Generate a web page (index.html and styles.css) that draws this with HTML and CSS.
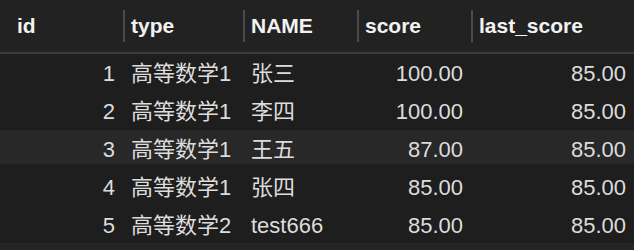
FILE: index.html
```html
<!DOCTYPE html>
<html>
<head>
<meta charset="utf-8">
<link rel="stylesheet" href="styles.css">
</head>
<body>
<div class="grid">
  <div class="head">
    <div class="hc first">id</div>
    <div class="hc">type</div>
    <div class="hc">NAME</div>
    <div class="hc">score</div>
    <div class="hc">last_score</div>
  </div>
  <div class="body">
    <div class="row"><div class="c num">1</div><div class="c">高等数学1</div><div class="c">张三</div><div class="c num">100.00</div><div class="c num">85.00</div></div>
    <div class="row"><div class="c num">2</div><div class="c">高等数学1</div><div class="c">李四</div><div class="c num">100.00</div><div class="c num">85.00</div></div>
    <div class="row alt"><div class="c num">3</div><div class="c">高等数学1</div><div class="c">王五</div><div class="c num">87.00</div><div class="c num">85.00</div></div>
    <div class="row"><div class="c num">4</div><div class="c">高等数学1</div><div class="c">张四</div><div class="c num">85.00</div><div class="c num">85.00</div></div>
    <div class="row"><div class="c num">5</div><div class="c">高等数学2</div><div class="c">test666</div><div class="c num">85.00</div><div class="c num">85.00</div></div>
  </div>
  <div class="foot"></div>
</div>
</body>
</html>
```

FILE: styles.css
```css
html, body {
  margin: 0;
  padding: 0;
  background: #1e1e1e;
}
body {
  font-family: "Liberation Sans", "Noto Sans CJK SC", sans-serif;
  font-size: 22px;
  color: #dcdcdc;
  width: 634px;
  height: 250px;
  overflow: hidden;
}
.grid {
  display: flex;
  flex-direction: column;
}
.head, .row {
  display: grid;
  grid-template-columns: 123px 120px 114px 114px 163px;
}
.head {
  height: 52px;
  align-items: center;
  background: #222222;
  border-bottom: 2px solid #3c3c3c;
}
.hc {
  height: 32px;
  line-height: 32px;
  border-left: 2px solid #4a4a4a;
  padding-left: 6px;
  color: #f2f2f2;
  font-weight: bold;
  font-size: 21px;
}
.hc.first {
  border-left: none;
  padding-left: 17px;
}
.body {
  display: flex;
  flex-direction: column;
  gap: 4px;
}
.row {
  height: 34px;
  box-sizing: border-box;
  padding-top: 6px;
  line-height: 28px;
}
.row.alt {
  background: #282828;
}
.c {
  padding-left: 8px;
  white-space: nowrap;
}
.c.num {
  text-align: right;
  padding-left: 0;
  padding-right: 8px;
}
.foot {
  margin-top: 3px;
  height: 7px;
  background: #252525;
}
```
